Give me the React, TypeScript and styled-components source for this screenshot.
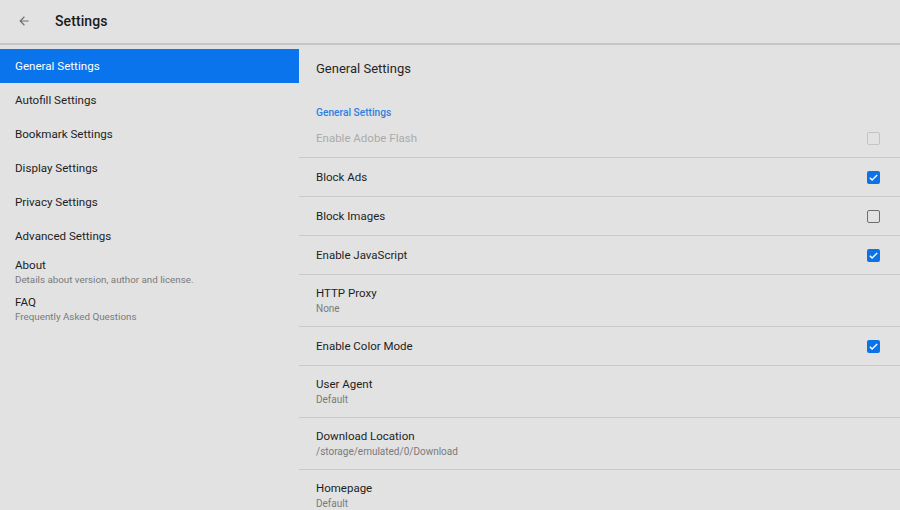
import React from "react";
import styled, { createGlobalStyle } from "styled-components";

const GlobalStyle = createGlobalStyle`
	html, body {
		margin: 0;
		padding: 0;
		background: #e2e2e2;
	}
	* {
		box-sizing: border-box;
	}
`;

type Nav = { title: string; summary?: string };
type Pref = {
	title: string;
	summary?: string;
	check?: "on" | "off";
	disabled?: boolean;
};

const navItems: Nav[] = [
	{ title: "General Settings" },
	{ title: "Autofill Settings" },
	{ title: "Bookmark Settings" },
	{ title: "Display Settings" },
	{ title: "Privacy Settings" },
	{ title: "Advanced Settings" },
	{ title: "About", summary: "Details about version, author and license." },
	{ title: "FAQ", summary: "Frequently Asked Questions" },
];

const prefs: Pref[] = [
	{ title: "Enable Adobe Flash", check: "off", disabled: true },
	{ title: "Block Ads", check: "on" },
	{ title: "Block Images", check: "off" },
	{ title: "Enable JavaScript", check: "on" },
	{ title: "HTTP Proxy", summary: "None" },
	{ title: "Enable Color Mode", check: "on" },
	{ title: "User Agent", summary: "Default" },
	{ title: "Download Location", summary: "/storage/emulated/0/Download" },
	{ title: "Homepage", summary: "Default" },
];

const BackArrow = () => (
	<svg width="14" height="14" viewBox="0 0 24 24">
		<path
			d="M20 11H7.83l5.59-5.59L12 4l-8 8 8 8 1.41-1.41L7.83 13H20v-2z"
			fill="#6f6f6f"
		/>
	</svg>
);

const Check = ({ state, disabled }: { state: "on" | "off"; disabled?: boolean }) => (
	<CheckBox $on={state === "on"} $disabled={disabled}>
		{state === "on" && (
			<svg width="11" height="11" viewBox="0 0 24 24">
				<path
					d="M4 12.5l5 5L20 6.5"
					fill="none"
					stroke="#fff"
					strokeWidth="3"
				/>
			</svg>
		)}
	</CheckBox>
);

const App: React.FC = () => {
	return (
		<>
			<GlobalStyle />
			<Screen>
				<Toolbar>
					<BackButton>
						<BackArrow />
					</BackButton>
					<ToolbarTitle>Settings</ToolbarTitle>
				</Toolbar>
				<Body>
					<Sidebar>
						{navItems.map((item, i) => (
							<NavItem key={i} $active={i === 0} $tall={!!item.summary}>
								<NavTitle>{item.title}</NavTitle>
								{item.summary && <NavSummary>{item.summary}</NavSummary>}
							</NavItem>
						))}
					</Sidebar>
					<Content>
						<PanelTitle>General Settings</PanelTitle>
						<Category>General Settings</Category>
						{prefs.map((p, i) => (
							<PrefRow key={i} $tall={!!p.summary}>
								<PrefText $tall={!!p.summary}>
									<PrefTitle $disabled={p.disabled}>{p.title}</PrefTitle>
									{p.summary && <PrefSummary>{p.summary}</PrefSummary>}
								</PrefText>
								{p.check && <Check state={p.check} disabled={p.disabled} />}
							</PrefRow>
						))}
					</Content>
				</Body>
			</Screen>
		</>
	);
};

export default App;

const Screen = styled.div`
	width: 900px;
	height: 510px;
	overflow: hidden;
	background: #e2e2e2;
	font-family: Roboto, "Noto Sans", sans-serif;
	color: #1e1e1e;
	display: flex;
	flex-direction: column;
`;
const Toolbar = styled.div`
	height: 45px;
	flex-shrink: 0;
	display: flex;
	align-items: center;
	border-bottom: 2px solid #c6c6c6;
	padding-bottom: 1px;
`;
const BackButton = styled.div`
	width: 55px;
	display: flex;
	justify-content: center;
	padding-right: 8px;
`;
const ToolbarTitle = styled.div`
	font-size: 14px;
	font-weight: 500;
	color: #1a1a1a;
	letter-spacing: 0.1px;
`;
const Body = styled.div`
	flex: 1;
	display: flex;
	min-height: 0;
`;
const Sidebar = styled.div`
	width: 299px;
	flex-shrink: 0;
	padding-top: 4px;
	display: flex;
	flex-direction: column;
`;
const NavItem = styled.div<{ $active?: boolean; $tall?: boolean }>`
	height: ${(p) => (p.$tall ? "37px" : "34px")};
	flex-shrink: 0;
	padding: ${(p) => (p.$tall ? "4px 15px 3px" : "0 15px")};
	display: flex;
	flex-direction: column;
	justify-content: ${(p) => (p.$tall ? "flex-start" : "center")};
	background: ${(p) => (p.$active ? "#0a74ec" : "transparent")};
	color: ${(p) => (p.$active ? "#fff" : "#1e1e1e")};
`;
const NavTitle = styled.div`
	font-size: 11.6px;
	line-height: 16px;
`;
const NavSummary = styled.div`
	font-size: 9.8px;
	line-height: 14px;
	color: #7a7a7a;
`;
const Content = styled.div`
	flex: 1;
	display: flex;
	flex-direction: column;
`;
const PanelTitle = styled.div`
	height: 46px;
	flex-shrink: 0;
	padding-left: 17px;
	display: flex;
	align-items: center;
	font-size: 13px;
	color: #262626;
`;
const Category = styled.div`
	padding: 15px 17px 0;
	height: 28px;
	flex-shrink: 0;
	font-size: 10.2px;
	line-height: 14px;
	font-weight: 500;
	color: #2f7fe2;
`;
const PrefRow = styled.div<{ $tall?: boolean }>`
	height: ${(p) => (p.$tall ? "52px" : "39px")};
	flex-shrink: 0;
	padding: 0 20px 0 17px;
	display: flex;
	align-items: center;
	justify-content: space-between;
	border-bottom: 1px solid #c9c9c9;
`;
const PrefText = styled.div<{ $tall?: boolean }>`
	display: flex;
	flex-direction: column;
	gap: 1px;
	padding-top: ${(p) => (p.$tall ? "1px" : "0")};
`;
const PrefTitle = styled.div<{ $disabled?: boolean }>`
	font-size: 11.5px;
	line-height: 15px;
	color: ${(p) => (p.$disabled ? "#ababab" : "#1e1e1e")};
`;
const PrefSummary = styled.div`
	font-size: 10px;
	line-height: 14px;
	color: #7a7a7a;
`;
const CheckBox = styled.div<{ $on?: boolean; $disabled?: boolean }>`
	width: 13px;
	height: 13px;
	border-radius: 2px;
	display: flex;
	align-items: center;
	justify-content: center;
	background: ${(p) => (p.$on ? "#0b73e6" : "transparent")};
	border: ${(p) =>
		p.$on
			? "none"
			: p.$disabled
			? "1.5px solid #c4c4c4"
			: "1.5px solid #6e6e6e"};
`;
